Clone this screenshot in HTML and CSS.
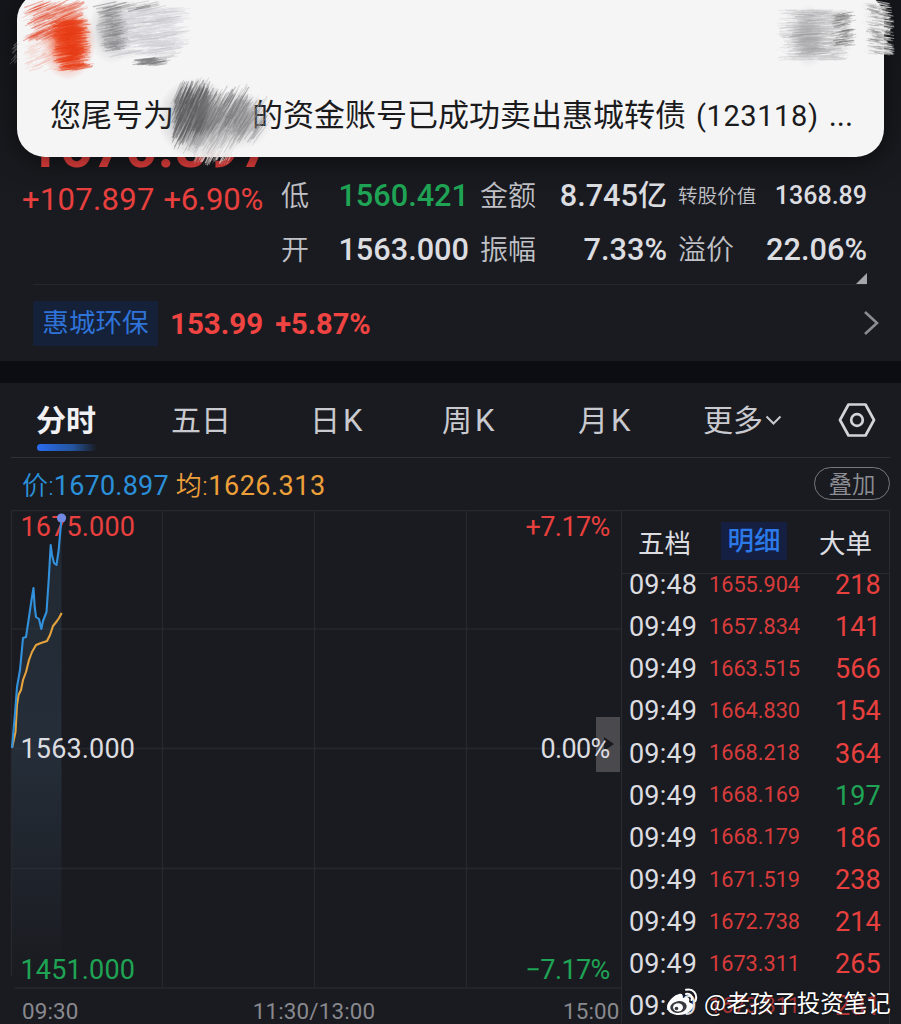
FILE: index.html
```html
<!DOCTYPE html>
<html lang="zh-CN">
  <head>
    <meta charset="utf-8">
    <meta name="viewport" content="width=device-width,initial-scale=1.0">
    <title>分时</title>
    <link rel="stylesheet" href="styles.css">
  </head>
  <body>
    <div class="notice">
      <p class="notice-text">您尾号为<span class="hidden-no"></span>的资金账号已成功卖出惠城转债<span class="code">(123118)</span><span class="dots">...</span></p>
    </div>
    <canvas id="marks" class="marks" width="901" height="180"></canvas>

    <div class="quote">
      <div class="price">
        <div class="last">1670.897</div>
        <div class="change"><span>+107.897</span><span>+6.90%</span></div>
      </div>
      <div class="stats">
        <div class="stat"><label>低</label><b class="green">1560.421</b></div>
        <div class="stat"><label>金额</label><b>8.745<i>亿</i></b></div>
        <div class="stat small"><label>转股价值</label><b>1368.89</b></div>
        <div class="stat"><label>开</label><b>1563.000</b></div>
        <div class="stat"><label>振幅</label><b>7.33%</b></div>
        <div class="stat"><label>溢价</label><b>22.06%</b></div>
      </div>
      <svg class="corner" width="11" height="11"><path d="M11 0V11H0Z" fill="#a5a6aa"/></svg>
    </div>

    <div class="related">
      <span class="stock">惠城环保</span>
      <span class="stock-price">153.99</span>
      <span class="stock-pct">+5.87%</span>
      <svg class="arrow" width="16" height="26" viewBox="0 0 16 26"><path d="M2 2L14 13L2 24" fill="none" stroke="#8b8c91" stroke-width="2.6"/></svg>
    </div>

    <div class="tabs">
      <span class="active">分时</span>
      <span>五日</span>
      <span>日<em>K</em></span>
      <span>周<em>K</em></span>
      <span>月<em>K</em></span>
      <span class="more">更多<svg width="17" height="11" viewBox="0 0 17 11"><path d="M1.5 1.5L8.5 8.5L15.5 1.5" fill="none" stroke="#c9cacf" stroke-width="2"/></svg></span>
      <svg class="gear" width="38" height="36" viewBox="0 0 38 36" fill="none" stroke="#d3d4d8" stroke-width="2.7"><path d="M10.5 2.5H27.5L36 18L27.5 33.5H10.5L2 18Z" stroke-linejoin="round"/><circle cx="19" cy="18" r="5.8"/></svg>
    </div>

    <div class="legend">
      <span class="blue"><i>价:</i>1670.897</span>
      <span class="orange"><i>均:</i>1626.313</span>
      <button class="overlay">叠加</button>
    </div>

    <div class="main">
      <svg class="chart" width="621" height="514" viewBox="0 510 621 514">
        <defs>
          <linearGradient id="fill" x1="0" y1="0" x2="0" y2="1">
            <stop offset="0" stop-color="#2c3c4c" stop-opacity=".4"/>
            <stop offset=".5" stop-color="#2c3a49" stop-opacity=".6"/>
            <stop offset="1" stop-color="#2c3a49" stop-opacity="0"/>
          </linearGradient>
        </defs>
        <path class="grid" d="M11.5 511V976M162.5 511V988M314.5 511V988M466.5 511V988M11 510.5H621M11 629H621M11 748.5H621M11 868.5H621M15 988H621"/>
        <path fill="url(#fill)" d="M12 748L15 713L17 687L20 670L23 638L26 637L29 617L31.5 600L33.5 588L34.7 607L36 617L39 619L41.3 629L43 621L46.5 612L48.7 580L50.7 545L52 555L54 563L56.5 565L58.7 550L61.5 518V976H12Z"/>
        <text x="20.5" y="536" class="red">1675.000</text>
        <text x="20.5" y="757.5">1563.000</text>
        <text x="20.5" y="978.5" class="green">1451.000</text>
        <rect x="596" y="717" width="24" height="55" fill="#4a4a4e"/>
        <path d="M604 737L614 744L604 751Z" fill="#1a1b20"/>
        <text x="610.5" y="536" text-anchor="end" textLength="85" class="red">+7.17%</text>
        <text x="610.5" y="757.5" text-anchor="end" textLength="70">0.00%</text>
        <text x="610.5" y="978.5" text-anchor="end" textLength="85" class="green">−7.17%</text>
        <path class="line avg" d="M12 748L15.5 732L17 705L18.5 695L21 690L23 680L26 672L29 660L32 652L36 645L41 643L47 641L50 635L53 626L57 621L59 618L61.7 613"/>
        <path class="line now" d="M12 748L15 713L17 687L20 670L23 638L26 637L29 617L31.5 600L33.5 588L34.7 607L36 617L39 619L41.3 629L43 621L46.5 612L48.7 580L50.7 545L52 555L54 563L56.5 565L58.7 550L61.5 518"/>
        <circle cx="61.5" cy="518" r="4.6" fill="#7189e0"/>
        <g class="time">
          <text x="22" y="1019">09:30</text>
          <text x="314" y="1019" text-anchor="middle">11:30/13:00</text>
          <text x="619.5" y="1019" text-anchor="end">15:00</text>
        </g>
      </svg>

      <div class="panel">
        <div class="panel-tabs"><span>五档</span><span class="on">明细</span><span>大单</span></div>
        <div class="trades">
          <div class="trade"><span>09:48</span><span>1655.904</span><span>218</span></div>
          <div class="trade"><span>09:49</span><span>1657.834</span><span>141</span></div>
          <div class="trade"><span>09:49</span><span>1663.515</span><span>566</span></div>
          <div class="trade"><span>09:49</span><span>1664.830</span><span>154</span></div>
          <div class="trade"><span>09:49</span><span>1668.218</span><span>364</span></div>
          <div class="trade"><span>09:49</span><span>1668.169</span><span class="green">197</span></div>
          <div class="trade"><span>09:49</span><span>1668.179</span><span>186</span></div>
          <div class="trade"><span>09:49</span><span>1671.519</span><span>238</span></div>
          <div class="trade"><span>09:49</span><span>1672.738</span><span>214</span></div>
          <div class="trade"><span>09:49</span><span>1673.311</span><span>265</span></div>
          <div class="trade last-trade"><span>09:49</span><span>1673.311</span><span>231</span></div>
        </div>
      </div>
    </div>

    <div class="watermark">
      <svg width="32" height="28" viewBox="0 0 32 28">
        <path fill="#fff" d="M13 6C8 7 1 14 1 19C1 24 7 27 13 27C21 27 27 22 27 18C27 15 24 15 23 14C24 11 23 8 17 10C17 7 16 5 13 6Z"/>
        <ellipse cx="12.5" cy="19" rx="8.3" ry="5.8" fill="#393a40" transform="rotate(-9 12.5 19)"/>
        <ellipse cx="12" cy="19.4" rx="5" ry="4.2" fill="#fff"/>
        <circle cx="10.5" cy="20.5" r="1.8" fill="#393a40"/>
        <path d="M20 6C24 5 27 8 25.5 12M20 1.8C27 0 32 6 29.5 13" fill="none" stroke="#fff" stroke-width="2" stroke-linecap="round"/>
      </svg>
      <span>@老孩子投资笔记</span>
    </div>

    <script src="marks.js"></script>
  </body>
</html>
```

FILE: styles.css
```css
* { box-sizing: border-box; }
body { margin: 0; height: 1024px; overflow: hidden; position: relative; background: #1a1b20; color: #dcdde1; font-family: Roboto, "Noto Sans CJK SC", sans-serif; }
i, em { font-style: normal; }
.red { color: #e8403e; fill: #e8403e; }
.green { color: #1fa455; fill: #1fa455; }

.notice { position: absolute; z-index: 2; left: 17px; right: 17px; top: -8px; height: 165px; border-radius: 28px; background: #f5f5f6; box-shadow: 0 4px 24px rgba(0, 0, 0, 0.5); padding: 101px 0 0 33px; }
.notice-text { margin: 0; color: #1b1b1d; font-size: 31px; line-height: 46px; white-space: nowrap; }
.hidden-no { display: inline-block; width: 78px; }
.code { font-size: 29px; margin-left: 10px; letter-spacing: 0.6px; }
.dots { margin-left: 10px; }
.marks { position: absolute; z-index: 3; left: 0; top: 0; }

/* quote */
.quote { position: relative; height: 286px; display: flex; padding: 118px 0 0 22px; background: linear-gradient(#15161b, #1a1b20 75%); }
.quote:after { content: ""; position: absolute; left: 33px; right: 35px; bottom: 1px; height: 1px; background: #26272c; }
.price { width: 259px; color: #e8403e; }
.last { font-size: 57px; line-height: 64px; font-weight: 700; padding-left: 5px; margin-top: -2px; margin-bottom: 2px; }
.change { display: flex; justify-content: space-between; font-size: 31px; line-height: 36px; width: 241px; }
.change span:first-child { letter-spacing: 0.3px; }
.change span:last-child { letter-spacing: -0.2px; }
.stats { display: grid; grid-template-columns: 188px 187px 189px; grid-auto-rows: 54px; column-gap: 11px; padding-top: 51px; }
.stat { display: flex; justify-content: space-between; align-items: center; line-height: 54px; font-size: 28px; white-space: nowrap; }
.stat label { color: #c0c1c6; font-weight: 350; margin-top: 1px; }
.stat b { font-size: 30.7px; font-weight: 500; }
.stat b i { font-size: 29px; }
.small label { font-size: 19.6px; }
.small b { font-size: 25px; }
.corner { position: absolute; left: 856px; top: 273px; }

.related { height: 75px; display: flex; align-items: center; padding: 1px 22px 0 33px; color: #f04442; font-weight: 700; }
.stock { width: 125px; height: 45px; line-height: 44px; margin-top: -2px; text-align: center; font-size: 26.6px; font-weight: 400; color: #2f72d8; background: #142139; }
.stock-price { font-size: 29.5px; margin-left: 12px; }
.stock-pct { font-size: 29px; margin-left: 12px; }
.arrow { margin-left: auto; margin-top: -2px; }

/* chart tabs */
.tabs { height: 97px; border-top: 22px solid #0c0d12; display: grid; grid-template-columns: 135px 139px 132px 136px 125px 134px auto; align-items: center; padding-left: 36px; font-size: 30px; color: #c9cacf; position: relative; }
.tabs:after { content: ""; position: absolute; left: 11px; right: 11px; bottom: 0; height: 1px; background: #303136; }
.tabs > span { line-height: 74px; padding-top: 1px; }
.tabs em { margin-left: 3px; font-size: 31px; }
.active { color: #f1f1f4; font-weight: 700; position: relative; }
.active:after { content: ""; position: absolute; left: 1px; bottom: 7px; width: 60px; height: 7px; border-radius: 4px; background: linear-gradient(90deg, #2a6df0, #24549c 60%, #1a1b20); }
.more svg { margin-left: 2px; vertical-align: 5px; }
.gear { margin-top: -1px; margin-left: 1px; }

.legend { height: 53px; display: flex; align-items: center; padding: 0 11px 2px 22px; font-size: 27px; }
.legend i { font-size: 26px; font-weight: 350; }
.legend span { letter-spacing: 0.2px; }
.blue { color: #2b90d9; }
.orange { color: #eda03a; margin-left: 7px; }
.legend .orange { letter-spacing: 0.5px; }
.overlay { margin: 0 0 0 auto; width: 76px; height: 33px; padding: 0; border: 1px solid #77787d; border-radius: 17px; background: none; color: #8d8e93; font: 350 23.5px/29px "Noto Sans CJK SC", sans-serif; }

.main { display: flex; height: 514px; margin-top: -1px; }
.chart { display: block; flex: none; font-size: 27px; letter-spacing: 0.15px; }
.chart text { fill: #dcdde1; }
.chart text.red { fill: #e8403e; }
.chart text.green { fill: #1fa455; }
.chart .time text { fill: #88898e; font-size: 22.4px; }
.grid { stroke: #27282d; stroke-width: 1.3; fill: none; }
.line { fill: none; stroke-width: 2.1; stroke-linejoin: round; }
.now { stroke: #3291dc; }
.avg { stroke: #e5a33d; }

.panel { width: 269px; border: 1px solid #2a2b30; border-bottom: 0; overflow: hidden; }
.panel-tabs { height: 63px; display: flex; justify-content: space-between; align-items: center; padding: 0 17px 2px 16px; font-size: 26.5px; border-bottom: 1px solid #292a2f; }
.panel-tabs .on { background: #151f42; color: #2c79e8; font-weight: 500; width: 66px; height: 38px; line-height: 38px; text-align: center; margin-right: 2px; }
.trades { overflow: hidden; }
.trade { display: grid; grid-template-columns: 81px 1fr auto; align-items: center; height: 42.15px; padding: 0 8px 0 7px; font-size: 27px; color: #e8403e; }
.trade:first-child { margin-top: -10px; }
.trade span:first-child { color: #dcdde1; letter-spacing: 0.2px; }
.trade span:nth-child(2) { font-size: 21.7px; color: #d83b3b; margin: -2px 0 0 -1px; }
.trade span:last-child { letter-spacing: 0.2px; }
.last-trade span:nth-child(n+2) { opacity: 0.75; }

.watermark { position: absolute; left: 666px; top: 985px; display: flex; align-items: center; color: #fff; line-height: 34px; white-space: nowrap; text-shadow: 0 0 2px #000; }
.watermark span { margin-left: 6px; font-family: "Noto Sans CJK SC", sans-serif; font-size: 23.5px; }
```

FILE: marks.js
```javascript
const ctx = document.getElementById('marks').getContext('2d');
let seed = 7;

function rnd() {
  seed = (seed * 16807) % 2147483647;
  return seed / 2147483647;
}

// soft patch under the pencil strokes
function smudge(x, y, rx, ry, rgb, alpha) {
  ctx.save();
  ctx.translate(x, y);
  ctx.scale(rx, ry);
  const g = ctx.createRadialGradient(0, 0, 0, 0, 0, 1);
  g.addColorStop(0, `rgba(${rgb}, ${alpha})`);
  g.addColorStop(0.45, `rgba(${rgb}, ${alpha * 0.7})`);
  g.addColorStop(0.75, `rgba(${rgb}, ${alpha * 0.2})`);
  g.addColorStop(1, `rgba(${rgb}, 0)`);
  ctx.fillStyle = g;
  ctx.fillRect(-1, -1, 2, 2);
  ctx.restore();
}

// thin strokes scattered in a box, skew moves the lower strokes sideways
function hatch(x, y, w, h, angle, len, count, color, alpha, skew = 0) {
  ctx.strokeStyle = color;
  for (let i = 0; i < count; i++) {
    const t = rnd();
    const cx = x + rnd() * w + t * skew;
    const cy = y + t * h;
    const l = len * (0.3 + rnd() * 0.7) / 2;
    const a = angle + (rnd() - 0.5) * 0.12;
    ctx.globalAlpha = alpha * (0.3 + rnd() * 0.7);
    ctx.lineWidth = 0.4 + rnd() * 0.9;
    ctx.beginPath();
    ctx.moveTo(cx - Math.cos(a) * l, cy - Math.sin(a) * l);
    ctx.lineTo(cx + Math.cos(a) * l, cy + Math.sin(a) * l);
    ctx.stroke();
  }
  ctx.globalAlpha = 1;
}

// red logo
hatch(32, 4, 46, 34, -0.4, 26, 300, '#e0482c', 0.45);
hatch(28, 36, 22, 34, -0.4, 16, 80, '#efa594', 0.35);
smudge(68, 42, 28, 38, '236, 62, 20', 0.9);
hatch(60, 20, 20, 50, -0.15, 22, 420, '#e63c16', 0.6, 4);

// sender name
smudge(112, 30, 24, 34, '130, 130, 132', 0.5);
hatch(116, 8, 62, 46, -0.1, 30, 420, '#cfcfd5', 0.5);
hatch(102, 6, 16, 44, -0.2, 18, 220, '#808082', 0.42, 6);
hatch(120, 8, 52, 50, -0.15, 34, 70, '#a3a3a7', 0.28);
hatch(104, 3, 50, 6, -0.22, 28, 26, '#666668', 0.5);
hatch(140, 58, 22, 7, -0.12, 22, 55, '#777779', 0.55);

// time
hatch(788, 10, 54, 50, -0.04, 28, 420, '#c2c2c4', 0.5);
smudge(809, 36, 18, 32, '130, 130, 132', 0.45);
hatch(794, 12, 48, 44, -0.06, 30, 110, '#969698', 0.4);
hatch(836, 12, 14, 34, -0.15, 14, 110, '#777', 0.55);
hatch(866, 2, 20, 52, 0.15, 15, 420, '#f0f0f0', 0.85, 3);
hatch(870, 4, 18, 50, 0.15, 13, 150, '#777', 0.5, 2);
hatch(12, 44, 5, 18, -0.8, 8, 22, '#aaa', 0.5);

// account number
smudge(195, 118, 38, 40, '85, 85, 87', 0.6);
smudge(234, 120, 40, 30, '125, 125, 127', 0.5);
hatch(176, 90, 30, 46, -1.15, 32, 380, '#58585a', 0.5);
hatch(200, 96, 46, 38, -1.05, 30, 300, '#747476', 0.5);
hatch(236, 104, 26, 30, -0.95, 32, 100, '#8c8c8e', 0.5);
hatch(186, 136, 50, 12, -1.05, 26, 90, '#a8a8aa', 0.5);
hatch(193, 153, 38, 7, -1.1, 14, 65, '#e3d8d6', 0.7);
```
